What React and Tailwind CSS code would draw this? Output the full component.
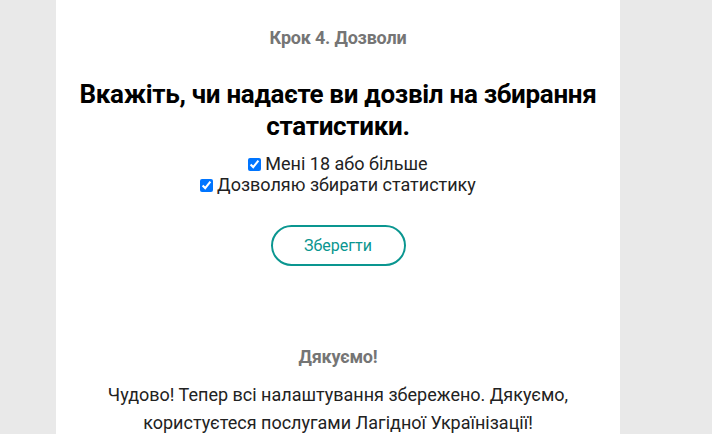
import React from 'react'

export default function App() {
  return (
    <div className="min-h-screen bg-[#e9e9e9] font-['Roboto',sans-serif]">
      <div className="ml-[56px] w-[564px] bg-white h-[434px] overflow-hidden text-center">
        <div className="pt-[28px] text-[18px] font-bold text-[#757575] tracking-[-0.2px] leading-[20px]">Крок 4. Дозволи</div>

        <h1 className="mt-[30px] px-[10px] text-[26px] font-bold text-black leading-[32px] tracking-[-0.3px]">
          Вкажіть, чи надаєте ви дозвіл на збирання статистики.
        </h1>

        <div className="mt-[11px] text-[18px] text-[#222] leading-[21px]">
          <label className="block">
            <input type="checkbox" defaultChecked className="accent-[#0075ff] w-[13px] h-[13px] mr-[4px] align-[-1px]" />
            Мені 18 або більше
          </label>
          <label className="block">
            <input type="checkbox" defaultChecked className="accent-[#0075ff] w-[13px] h-[13px] mr-[4px] align-[-1px]" />
            Дозволяю збирати статистику
          </label>
        </div>

        <button className="mt-[30px] w-[135px] h-[41px] rounded-full border-2 border-[#0a9690] text-[#0a9690] text-[16px] bg-white">
          Зберегти
        </button>

        <div className="mt-[81px] text-[18px] font-bold text-[#757575] tracking-[-0.2px] leading-[20px]">Дякуємо!</div>
        <p className="mt-[14px] px-[20px] text-[18px] text-[#222] leading-[28px]">
          Чудово! Тепер всі налаштування збережено. Дякуємо, користуєтеся послугами Лагідної Українізації!
        </p>
      </div>
    </div>
  )
}
